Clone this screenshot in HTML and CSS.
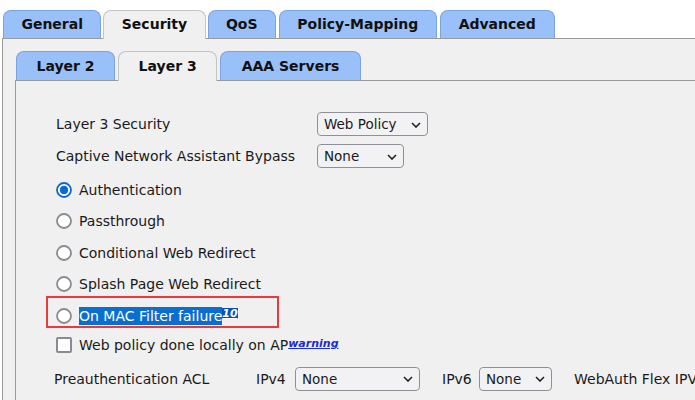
FILE: index.html
```html
<!DOCTYPE html>
<html>
<head>
<meta charset="utf-8">
<link rel="stylesheet" href="styles.css">
</head>
<body>
<div class="tabs outer-tabs">
  <div class="tab">General</div>
  <div class="tab active">Security</div>
  <div class="tab">QoS</div>
  <div class="tab policy">Policy-Mapping</div>
  <div class="tab adv">Advanced</div>
</div>
<div class="outer-panel">
  <div class="tabs inner-tabs">
    <div class="tab">Layer 2</div>
    <div class="tab active">Layer 3</div>
    <div class="tab aaa">AAA Servers</div>
  </div>
  <div class="inner-panel">
    <div class="row field">
      <span class="label">Layer 3 Security</span>
      <div class="select w-web"><span>Web Policy</span><svg class="chev" width="10" height="6" viewBox="0 0 10 6"><path d="M1 1 L5 5 L9 1" fill="none" stroke="#222" stroke-width="1.6"/></svg></div>
    </div>
    <div class="row field">
      <span class="label">Captive Network Assistant Bypass</span>
      <div class="select w-none"><span>None</span><svg class="chev" width="10" height="6" viewBox="0 0 10 6"><path d="M1 1 L5 5 L9 1" fill="none" stroke="#222" stroke-width="1.6"/></svg></div>
    </div>
    <div class="radios">
      <div class="row radio-row">
        <svg class="radio" width="16" height="16" viewBox="0 0 16 16"><circle cx="8" cy="8" r="7" fill="#fff" stroke="#0a68d6" stroke-width="1.8"/><circle cx="8" cy="8" r="4.2" fill="#0a68d6"/></svg>
        <span>Authentication</span>
      </div>
      <div class="row radio-row">
        <svg class="radio" width="16" height="16" viewBox="0 0 16 16"><circle cx="8" cy="8" r="7" fill="#fff" stroke="#8a8a94" stroke-width="1.8"/></svg>
        <span>Passthrough</span>
      </div>
      <div class="row radio-row">
        <svg class="radio" width="16" height="16" viewBox="0 0 16 16"><circle cx="8" cy="8" r="7" fill="#fff" stroke="#8a8a94" stroke-width="1.8"/></svg>
        <span>Conditional Web Redirect</span>
      </div>
      <div class="row radio-row">
        <svg class="radio" width="16" height="16" viewBox="0 0 16 16"><circle cx="8" cy="8" r="7" fill="#fff" stroke="#8a8a94" stroke-width="1.8"/></svg>
        <span>Splash Page Web Redirect</span>
      </div>
      <div class="row radio-row marked">
        <svg class="radio" width="16" height="16" viewBox="0 0 16 16"><circle cx="8" cy="8" r="7" fill="#fff" stroke="#8a8a94" stroke-width="1.8"/></svg>
        <span class="sel">On MAC Filter failure</span><a class="sup sel-link">10</a>
      </div>
    </div>
    <div class="row check-row">
      <span class="checkbox"></span>
      <span>Web policy done locally on AP</span><a class="sup link">warning</a>
    </div>
    <div class="row field acl">
      <span class="acl-label">Preauthentication ACL</span>
      <span class="ip">IPv4</span>
      <div class="select w-ipv4"><span>None</span><svg class="chev" width="10" height="6" viewBox="0 0 10 6"><path d="M1 1 L5 5 L9 1" fill="none" stroke="#222" stroke-width="1.6"/></svg></div>
      <span class="ip ip6">IPv6</span>
      <div class="select w-ipv6"><span>None</span><svg class="chev" width="10" height="6" viewBox="0 0 10 6"><path d="M1 1 L5 5 L9 1" fill="none" stroke="#222" stroke-width="1.6"/></svg></div>
      <span class="flex-label">WebAuth Flex IPV4</span>
    </div>
  </div>
</div>
</body>
</html>
```
FILE: styles.css
```css
html, body {
  margin: 0;
  padding: 0;
  background: #fff;
  overflow: hidden;
}
body {
  width: 695px;
  height: 400px;
  font-family: "DejaVu Sans", Verdana, sans-serif;
  font-size: 14px;
  color: #1a1a1a;
}
.tabs {
  display: flex;
  align-items: flex-end;
  position: relative;
  z-index: 1;
}
.outer-tabs {
  padding: 10px 0 0 3px;
  gap: 2px;
}
.tab {
  height: 27px;
  line-height: 27px;
  padding: 0 17.4px;
  background: #99c0f8;
  border: 1px solid #7aa3e2;
  border-bottom: none;
  border-radius: 8px 8px 0 0;
  font-weight: bold;
  color: #111;
  white-space: nowrap;
}
.tab.policy {
  margin-left: 1px;
}
.tab.adv {
  margin-left: 1px;
  padding: 0 18px;
}
.tab.active {
  background: #f0f0f0;
  border-color: #c4c4c4;
  height: 28px;
  margin-bottom: -1px;
}
.outer-panel {
  margin-left: 2px;
  border-top: 1px solid #9a9a9a;
  border-left: 1px solid #9a9a9a;
  background: #f0f0f0;
  padding: 12px 0 0 12px;
  height: 400px;
}
.inner-tabs {
  padding-left: 1px;
  gap: 3px;
}
.inner-tabs .tab {
  height: 28px;
  line-height: 29px;
  padding: 0 19.5px;
}
.inner-tabs .tab.active {
  height: 29px;
  padding: 0 19.5px;
}
.inner-tabs .tab.aaa {
  padding: 0 20.5px;
}
.inner-panel {
  border-top: 1px solid #9a9a9a;
  border-left: 1px solid #9a9a9a;
  padding: 31px 0 0 40px;
  height: 400px;
}
.row {
  display: flex;
  align-items: center;
  white-space: nowrap;
}
.field {
  height: 24px;
  margin-bottom: 8px;
}
.label {
  width: 261px;
  flex: none;
}
.select {
  box-sizing: border-box;
  height: 24px;
  border: 1px solid #8f8f98;
  border-radius: 4px;
  background: #f2f2f4;
  display: flex;
  align-items: center;
  justify-content: space-between;
  padding: 0 6px 0 6px;
  font-size: 13.5px;
  color: #1a1a1a;
  flex: none;
}
.chev {
  flex: none;
  margin-top: 1px;
}
.w-web { width: 111px; }
.w-none { width: 87px; }
.w-ipv4 { width: 125px; }
.w-ipv6 { width: 73px; }
.radios {
  margin-top: -2px;
}
.radio-row {
  height: 31.5px;
  position: relative;
}
.radio {
  flex: none;
  margin-right: 7px;
}
.sel {
  background: #0a6ed1;
  color: #fff;
  line-height: 18px;
}
.sup {
  font-size: 11px;
  font-weight: bold;
  font-style: italic;
  text-decoration: underline;
  align-self: flex-start;
  line-height: 11px;
}
.sel-link {
  background: #0a4fb5;
  color: #fff;
  margin-top: 8px;
}
.marked::after {
  content: "";
  position: absolute;
  left: -10px;
  top: -4px;
  width: 229px;
  height: 28px;
  border: 2px solid #ea3a3e;
  pointer-events: none;
}
.check-row {
  height: 28px;
  margin-top: -1px;
}
.checkbox {
  box-sizing: border-box;
  width: 16px;
  height: 16px;
  border: 2px solid #8a8a94;
  border-radius: 2px;
  background: #fff;
  margin-right: 7px;
  flex: none;
}
.link {
  color: #1a2ae0;
  margin-top: 7px;
}
.acl {
  margin-top: 8px;
  margin-left: -2px;
}
.acl-label {
  width: 202px;
  flex: none;
}
.ip {
  width: 39px;
  flex: none;
}
.ip6 {
  margin-left: 22px;
  width: 37px;
}
.flex-label {
  margin-left: 22px;
}
```
